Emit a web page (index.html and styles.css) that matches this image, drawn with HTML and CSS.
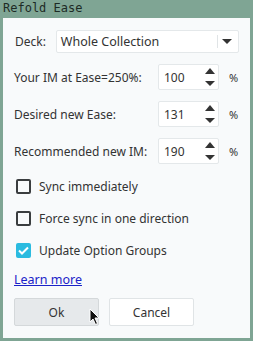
FILE: index.html
```html
<!DOCTYPE html>
<html lang="en">
<head>
    <meta charset="UTF-8">
    <meta name="viewport" content="width=device-width, initial-scale=1.0">
    <title>Refold Ease</title>
    <link rel="stylesheet" href="styles.css">
</head>
<body>
    <div class="title-bar">Refold Ease</div>
    <div class="dialog">
        <div class="deck-row">
            <span class="label">Deck:</span>
            <div class="combo">
                <span class="combo-text">Whole Collection</span>
                <span class="combo-arrow"></span>
            </div>
        </div>
        <div class="field-row">
            <span class="label field-label">Your IM at Ease=250%:</span>
            <div class="spin">
                <span class="spin-value">100</span>
                <span class="spin-arrows"><span class="up"></span><span class="down"></span></span>
            </div>
            <span class="unit">%</span>
        </div>
        <div class="field-row">
            <span class="label field-label">Desired new Ease:</span>
            <div class="spin">
                <span class="spin-value">131</span>
                <span class="spin-arrows"><span class="up"></span><span class="down"></span></span>
            </div>
            <span class="unit">%</span>
        </div>
        <div class="field-row">
            <span class="label field-label">Recommended new IM:</span>
            <div class="spin">
                <span class="spin-value">190</span>
                <span class="spin-arrows"><span class="up"></span><span class="down"></span></span>
            </div>
            <span class="unit">%</span>
        </div>
        <div class="checks">
            <label class="check-row"><span class="box"></span>Sync immediately</label>
            <label class="check-row"><span class="box"></span>Force sync in one direction</label>
            <label class="check-row"><span class="box checked">
                <svg width="11" height="9" viewBox="0 0 11 9"><path d="M1 4.5 L4 7.5 L10 1.5" fill="none" stroke="#fff" stroke-width="2"/></svg>
            </span>Update Option Groups</label>
        </div>
        <a class="learn" href="#">Learn more</a>
        <div class="buttons">
            <button class="btn btn-ok">Ok</button>
            <button class="btn">Cancel</button>
            <svg class="cursor" width="12" height="18" viewBox="0 0 12 18"><path d="M1 1 L1 14 L4 11 L6.5 16.5 L8.5 15.5 L6 10 L10 10 Z" fill="#111" stroke="#fff" stroke-width="1"/></svg>
        </div>
    </div>
</body>
</html>
```

FILE: styles.css
```css
body {
    margin: 0;
    background-color: #7fa594;
    font-family: "Noto Sans", sans-serif;
    font-size: 12px;
    color: #333;
    width: 253px;
    height: 341px;
    overflow: hidden;
}
.title-bar {
    height: 18px;
    padding-left: 3px;
    font-family: "DejaVu Sans Mono", monospace;
    font-size: 12px;
    line-height: 17px;
    color: #1d2b25;
}
.dialog {
    margin: 0 3px;
    height: 320px;
    background-color: #f8fafb;
    padding: 12px 11px 0 11px;
    box-sizing: border-box;
}
.deck-row {
    display: flex;
    align-items: center;
    height: 23px;
}
.deck-row .label {
    width: 41px;
    padding-left: 1px;
}
.combo {
    width: 184px;
    height: 23px;
    box-sizing: border-box;
    border: 1px solid #e4e8ea;
    border-radius: 2px;
    background-color: #fff;
    display: flex;
    align-items: center;
}
.combo-text {
    flex: 1;
    padding-left: 4px;
    font-size: 12.5px;
}
.combo-arrow {
    width: 20px;
    height: 13px;
    border-left: 1px solid #e0e4e6;
    position: relative;
}
.combo-arrow::after {
    content: "";
    position: absolute;
    left: 4px;
    top: 4px;
    border-left: 5px solid transparent;
    border-right: 5px solid transparent;
    border-top: 5px solid #333;
}
.field-row {
    display: flex;
    align-items: center;
    height: 26px;
    margin-top: 11px;
}
.field-label {
    width: 144px;
}
.spin {
    width: 61px;
    height: 26px;
    box-sizing: border-box;
    border: 1px solid #e4e8ea;
    border-radius: 2px;
    background-color: #fff;
    display: flex;
    align-items: center;
}
.spin-value {
    flex: 1;
    padding-left: 5px;
}
.spin-arrows {
    width: 16px;
    height: 22px;
    display: flex;
    flex-direction: column;
    justify-content: space-between;
    align-items: center;
    padding: 2px 0;
    box-sizing: border-box;
}
.spin-arrows .up {
    border-left: 5px solid transparent;
    border-right: 5px solid transparent;
    border-bottom: 6px solid #333;
}
.spin-arrows .down {
    border-left: 5px solid transparent;
    border-right: 5px solid transparent;
    border-top: 5px solid #333;
}
.unit {
    margin-left: 10px;
    font-size: 11px;
}
.checks {
    margin-top: 14px;
    padding-left: 2px;
}
.check-row {
    display: flex;
    align-items: center;
    height: 16px;
    margin-bottom: 16px;
}
.check-row:last-child {
    margin-bottom: 8px;
}
.box {
    width: 15px;
    height: 15px;
    box-sizing: border-box;
    border: 2px solid #3a3d3f;
    border-radius: 2px;
    margin-right: 8px;
    display: flex;
    align-items: center;
    justify-content: center;
}
.box.checked {
    border: none;
    background-color: #2bbbe0;
}
.learn {
    display: inline-block;
    margin-top: 5px;
    color: #1a22c8;
    font-size: 12.5px;
}
.buttons {
    display: flex;
    gap: 10px;
    margin-top: 10px;
    position: relative;
}
.btn {
    width: 85px;
    height: 28px;
    font-family: "Noto Sans", sans-serif;
    font-size: 12px;
    color: #333;
    background-color: #fff;
    border: 1px solid #e0e4e6;
    border-radius: 2px;
}
.btn-ok {
    background-color: #e6e9eb;
    border-color: #d4d8da;
}
.cursor {
    position: absolute;
    left: 75px;
    top: 10px;
}
```
